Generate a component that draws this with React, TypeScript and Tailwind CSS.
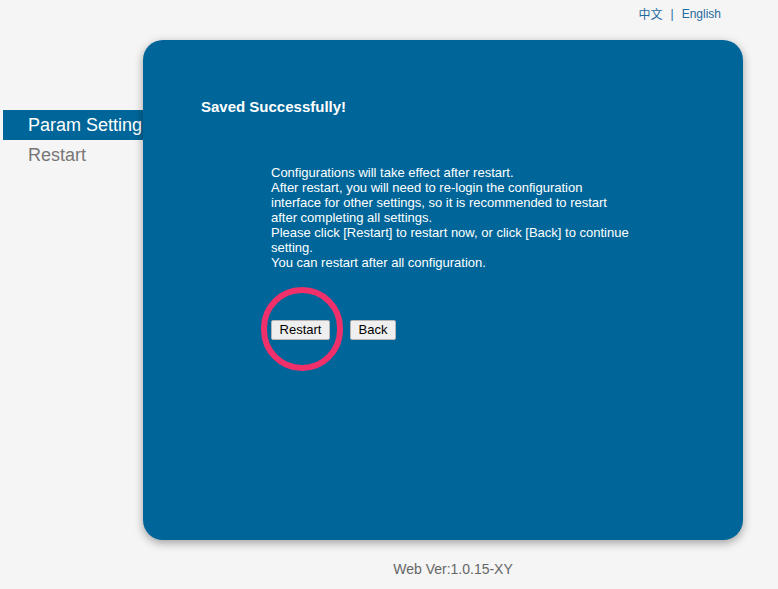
export default function App() {
  return (
    <div className="relative h-[589px] w-[778px] overflow-hidden bg-[#f5f5f5] font-['Liberation_Sans',Arial,sans-serif]">
      <div className="flex h-[40px] items-start justify-end pr-[57px] pt-[6px] text-[12px] leading-[16px] text-[#1f6aa0]">
        <span className="font-['Noto_Sans_CJK_SC',sans-serif]">中文</span>
        <span className="mx-[8px]">|</span>
        <span>English</span>
      </div>

      <div className="flex">
        <div className="ml-[3px] w-[140px] overflow-hidden pt-[70px]">
          <div className="flex h-[30px] items-center whitespace-nowrap bg-[#006699] pl-[25px] text-[18px] text-white">
            Param Setting
          </div>
          <div className="flex h-[30px] items-center pl-[25px] text-[18px] text-[#777]">Restart</div>
        </div>

        <div className="relative h-[500px] w-[600px] rounded-[20px] bg-[#006699] shadow-[0_3px_10px_rgba(0,0,0,0.35)]">
          <div className="pl-[58px] pt-[57px] text-[15px] font-bold leading-[20px] text-white">
            Saved Successfully!
          </div>
          <div className="ml-[128px] mt-[48px] w-[361px] text-[13px] leading-[15px] text-white">
            <p>Configurations will take effect after restart.</p>
            <p>
              After restart, you will need to re-login the configuration interface for other settings, so it is
              recommended to restart after completing all settings.
            </p>
            <p>Please click [Restart] to restart now, or click [Back] to continue setting.</p>
            <p>You can restart after all configuration.</p>
          </div>
          <div className="ml-[128px] mt-[50px] flex gap-[20px]">
            <button className="h-[20px] w-[59px] rounded-[2px] border border-[#b5b5b5] bg-[#efefef] text-[13px] leading-[18px] text-black">
              Restart
            </button>
            <button className="h-[20px] w-[46px] rounded-[2px] border border-[#b5b5b5] bg-[#efefef] text-[13px] leading-[18px] text-black">
              Back
            </button>
          </div>
          <div className="pointer-events-none absolute left-[118px] top-[247px] h-[84px] w-[82px] rounded-full border-[6px] border-[#f0306a]" />
        </div>
      </div>

      <div className="mt-[19px] pl-[143px] text-[14px] leading-[20px] text-[#666]">
        <span className="block w-[620px] text-center">Web Ver:1.0.15-XY</span>
      </div>
    </div>
  );
}
